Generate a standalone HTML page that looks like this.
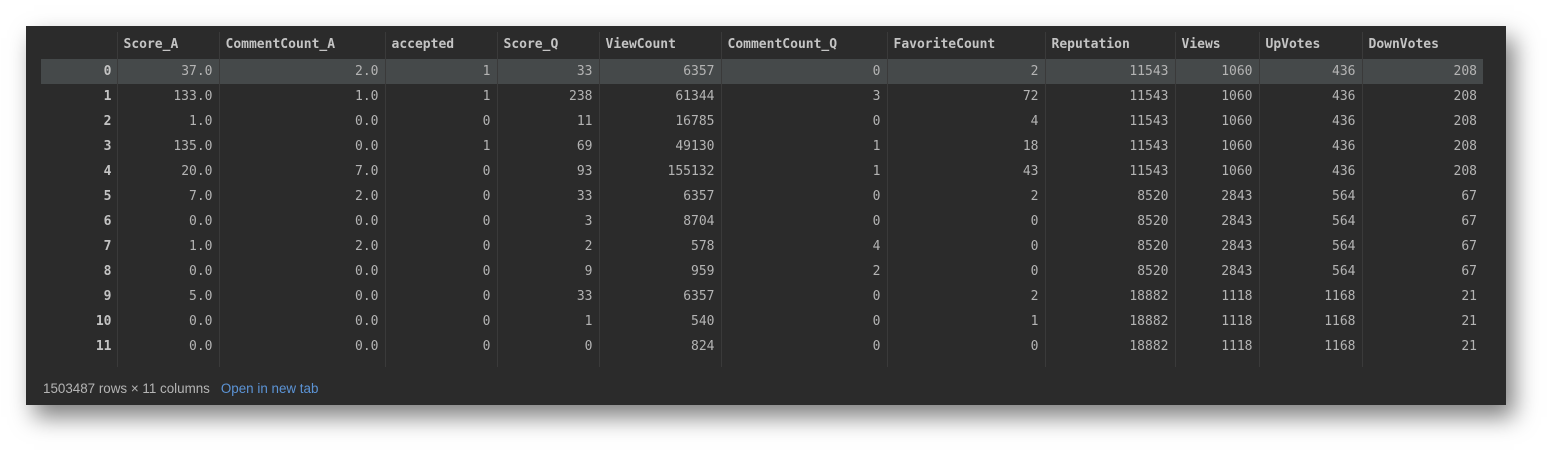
<!DOCTYPE html>
<html><head><style>
body{margin:0;width:1558px;height:457px;background:#fff;position:relative;overflow:hidden}
.panel{position:absolute;left:26px;top:26px;width:1480px;height:379px;background:#2b2b2b;box-shadow:8px 12px 22px rgba(0,0,0,.5)}
table{position:absolute;left:15px;top:6px;border-collapse:collapse;font-family:"DejaVu Sans Mono","Liberation Mono",monospace;font-size:13px;color:#b4b4b4;table-layout:fixed}
td,th{height:25px;padding:0 6px;white-space:nowrap;border-left:1px solid #3a3a3a;text-align:right;box-sizing:border-box}
th{text-align:left;font-weight:bold;color:#c4c4c4;height:27px;padding-bottom:2px}
td:first-child,th:first-child{border-left:none;padding-right:5px}
td:first-child{font-weight:bold;color:#c4c4c4}
tr.sel td{background:#45494a}
tr.last td{height:33px;vertical-align:top;padding-top:5px}
.foot{position:absolute;left:17px;top:355px;font-family:"Liberation Sans",sans-serif;font-size:13.4px;color:#b4b4b4}
.foot span{color:#5c94d6;margin-left:11px}
</style></head><body>
<div class="panel">
<table>
<colgroup><col style="width:76px"><col style="width:102px"><col style="width:166px"><col style="width:112px"><col style="width:102px"><col style="width:122px"><col style="width:166px"><col style="width:158px"><col style="width:130px"><col style="width:84px"><col style="width:103px"><col style="width:121px"></colgroup>
<tr><th></th><th>Score_A</th><th>CommentCount_A</th><th>accepted</th><th>Score_Q</th><th>ViewCount</th><th>CommentCount_Q</th><th>FavoriteCount</th><th>Reputation</th><th>Views</th><th>UpVotes</th><th>DownVotes</th></tr>
<tr class="sel"><td>0</td><td>37.0</td><td>2.0</td><td>1</td><td>33</td><td>6357</td><td>0</td><td>2</td><td>11543</td><td>1060</td><td>436</td><td>208</td></tr>
<tr><td>1</td><td>133.0</td><td>1.0</td><td>1</td><td>238</td><td>61344</td><td>3</td><td>72</td><td>11543</td><td>1060</td><td>436</td><td>208</td></tr>
<tr><td>2</td><td>1.0</td><td>0.0</td><td>0</td><td>11</td><td>16785</td><td>0</td><td>4</td><td>11543</td><td>1060</td><td>436</td><td>208</td></tr>
<tr><td>3</td><td>135.0</td><td>0.0</td><td>1</td><td>69</td><td>49130</td><td>1</td><td>18</td><td>11543</td><td>1060</td><td>436</td><td>208</td></tr>
<tr><td>4</td><td>20.0</td><td>7.0</td><td>0</td><td>93</td><td>155132</td><td>1</td><td>43</td><td>11543</td><td>1060</td><td>436</td><td>208</td></tr>
<tr><td>5</td><td>7.0</td><td>2.0</td><td>0</td><td>33</td><td>6357</td><td>0</td><td>2</td><td>8520</td><td>2843</td><td>564</td><td>67</td></tr>
<tr><td>6</td><td>0.0</td><td>0.0</td><td>0</td><td>3</td><td>8704</td><td>0</td><td>0</td><td>8520</td><td>2843</td><td>564</td><td>67</td></tr>
<tr><td>7</td><td>1.0</td><td>2.0</td><td>0</td><td>2</td><td>578</td><td>4</td><td>0</td><td>8520</td><td>2843</td><td>564</td><td>67</td></tr>
<tr><td>8</td><td>0.0</td><td>0.0</td><td>0</td><td>9</td><td>959</td><td>2</td><td>0</td><td>8520</td><td>2843</td><td>564</td><td>67</td></tr>
<tr><td>9</td><td>5.0</td><td>0.0</td><td>0</td><td>33</td><td>6357</td><td>0</td><td>2</td><td>18882</td><td>1118</td><td>1168</td><td>21</td></tr>
<tr><td>10</td><td>0.0</td><td>0.0</td><td>0</td><td>1</td><td>540</td><td>0</td><td>1</td><td>18882</td><td>1118</td><td>1168</td><td>21</td></tr>
<tr class="last"><td>11</td><td>0.0</td><td>0.0</td><td>0</td><td>0</td><td>824</td><td>0</td><td>0</td><td>18882</td><td>1118</td><td>1168</td><td>21</td></tr>
</table>
<div class="foot">1503487 rows × 11 columns<span>Open in new tab</span></div>
</div>
</body></html>
